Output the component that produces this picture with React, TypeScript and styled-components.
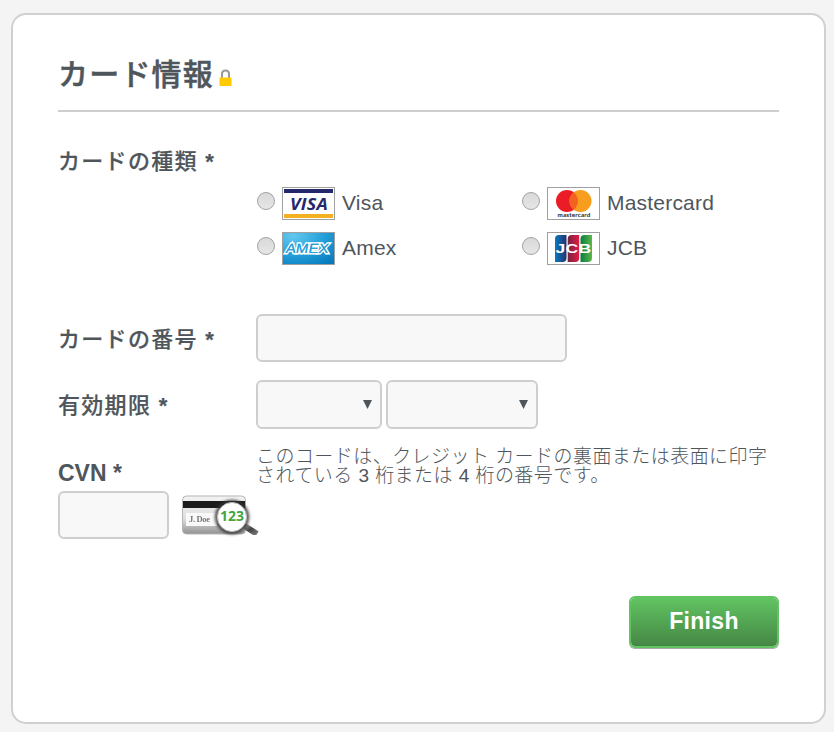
import React from "react";
import styled, { createGlobalStyle } from "styled-components";

const GlobalStyle = createGlobalStyle`
  * { box-sizing: border-box; }
  body {
    margin: 0;
    background: #f4f4f4;
    color: #4f565b;
    font-family: "Liberation Sans", "Noto Sans CJK JP", sans-serif;
  }
`;

const Page = styled.main`
  height: 732px;
  padding: 13px 8px 8px 11px;
  overflow: hidden;
`;

const Panel = styled.form`
  width: 815px;
  height: 711px;
  padding: 0 45px;
  border: 2px solid #d0d0d0;
  border-radius: 15px;
  background: #fff;
`;

const Header = styled.header`
  display: flex;
  height: 97px;
  padding-top: 39px;
  border-bottom: 2px solid #cecece;
`;

const Title = styled.h1`
  margin: 1px 0 0;
  font-size: 30px;
  line-height: 40px;
  letter-spacing: 1.2px;
  font-weight: 500;
  -webkit-text-stroke: 0.5px #4f565b;
`;

const Lock = styled.svg`
  margin: 15px 0 0 5px;
`;

const Label = styled.label<{ $latin?: boolean }>`
  display: block;
  width: 198px;
  flex: none;
  font-size: ${(p) => (p.$latin ? "23px" : "22px")};
  font-weight: ${(p) => (p.$latin ? 700 : 500)};
  line-height: 28px;
  letter-spacing: ${(p) => (p.$latin ? "0px" : "1.3px")};
  white-space: nowrap;
  -webkit-text-stroke: ${(p) => (p.$latin ? "0" : "0.2px #4f565b")};
`;

const Required = styled.span`
  font-weight: 700;
  letter-spacing: 0;
`;

const TypeSection = styled.section`
  height: 202px;
  padding-top: 36px;
`;

const TypeGrid = styled.div`
  display: grid;
  grid-template-columns: 265px 1fr;
  grid-auto-rows: 33px;
  row-gap: 12px;
  padding: 11px 0 0 199px;
`;

const TypeOption = styled.label`
  display: flex;
  align-items: flex-start;
  font-size: 21px;
  line-height: 31px;
  letter-spacing: 0.2px;
`;

const Radio = styled.input`
  appearance: none;
  width: 18px;
  height: 18px;
  margin: 5px 7px 0 0;
  border: 1px solid #a2a2a2;
  border-radius: 50%;
  background: linear-gradient(#d9d9d9, #e6e6e6);
`;

const CardArt = styled.svg`
  flex: none;
  margin-right: 7px;
`;

const FieldRow = styled.div`
  display: flex;
  align-items: center;
  height: 48px;
  margin-bottom: 18px;
`;

const FieldLabel = styled(Label)`
  padding-top: 4px;
`;

const TextField = styled.input<{ $width: number }>`
  width: ${(p) => p.$width}px;
  height: 48px;
  border: 2px solid #cecece;
  border-radius: 6px;
  background: #f8f8f8;
`;

const Dropdown = styled.button<{ $width: number }>`
  display: flex;
  align-items: center;
  justify-content: flex-end;
  width: ${(p) => p.$width}px;
  height: 49px;
  margin: 1px 4px 0 0;
  padding: 0 8px 1px 0;
  border: 2px solid #cecece;
  border-radius: 6px;
  background: #f8f8f8;
`;

const CvnRow = styled.div`
  display: flex;
  height: 45px;
`;

const CvnLabel = styled(Label)`
  padding-top: 13px;
`;

const Hint = styled.p`
  margin: 1px -8px 0 0;
  font-size: 19px;
  font-weight: 300;
  line-height: 19px;
  letter-spacing: 0.45px;
  white-space: nowrap;
`;

const CvnEntry = styled.div`
  display: flex;
  gap: 12px;
  height: 48px;
`;

const Actions = styled.footer`
  display: flex;
  justify-content: flex-end;
  margin-top: 57px;
`;

const Finish = styled.button`
  width: 150px;
  height: 52px;
  padding: 0 0 2px;
  border: 2px solid #61c361;
  border-radius: 6px;
  background: linear-gradient(#61c361, #458745) padding-box;
  box-shadow: 0 1px 0 #aaa;
  color: #fff;
  font: 700 23px "Liberation Sans", sans-serif;
  letter-spacing: 0.3px;
`;

const Arrow = () => (
  <svg width="9" height="9" viewBox="0 0 9 9">
    <path d="M0 0h9L4.5 9z" fill="#4f565b" />
  </svg>
);

const Frame = ({ fill = "#fff" }: { fill?: string }) => (
  <rect x=".5" y=".5" width="52" height="32" fill={fill} stroke="#a0a0a0" />
);

const Visa = () => (
  <CardArt width="53" height="33" viewBox="0 0 53 33">
    <Frame />
    <path d="M2 2h49v4H2z" fill="#26286c" />
    <path d="M2 27h49v4H2z" fill="#f3b122" />
    <text x="8" y="22.8" textLength="38" lengthAdjust="spacingAndGlyphs" fontFamily="Open Sans" fontSize="16.5" fontWeight="700" fontStyle="italic" fill="#26286c">VISA</text>
  </CardArt>
);

const Mastercard = () => (
  <CardArt width="53" height="33" viewBox="0 0 53 33">
    <Frame />
    <circle cx="20" cy="14" r="11" fill="#eb1c26" />
    <circle cx="33.5" cy="14" r="11" fill="#f79e1f" />
    <path d="M26.75 5.3a11 11 0 0 1 0 17.4 11 11 0 0 1 0-17.4z" fill="#f26322" />
    <text x="10.5" y="30" textLength="33" lengthAdjust="spacingAndGlyphs" fontFamily="Lato" fontSize="5.8" fontWeight="700" fill="#222">mastercard</text>
  </CardArt>
);

const Amex = () => (
  <CardArt width="53" height="33" viewBox="0 0 53 33">
    <defs>
      <radialGradient id="amexBlue" cx=".2" cy=".1" r="1.1">
        <stop offset="0" stopColor="#62c8ed" />
        <stop offset=".55" stopColor="#239fd8" />
        <stop offset="1" stopColor="#087abe" />
      </radialGradient>
    </defs>
    <Frame fill="url(#amexBlue)" />
    <g transform="translate(3.5 0) skewX(-10) translate(3.5 0)">
      <text x="0" y="21.5" textLength="43" lengthAdjust="spacingAndGlyphs" fontFamily="Liberation Sans" fontSize="13.5" fill="#2a9fd6" stroke="#fff" strokeWidth="2.8" paintOrder="stroke" strokeLinejoin="miter">AMEX</text>
      <text x="0" y="21.5" textLength="43" lengthAdjust="spacingAndGlyphs" fontFamily="Liberation Sans" fontSize="13.5" fill="#2a9fd6">AMEX</text>
    </g>
  </CardArt>
);

const Jcb = () => (
  <CardArt width="53" height="33" viewBox="0 0 53 33">
    <defs>
      <linearGradient id="jcbBlue"><stop stopColor="#087bc1" /><stop offset="1" stopColor="#25306e" /></linearGradient>
      <linearGradient id="jcbRed"><stop stopColor="#73243f" /><stop offset="1" stopColor="#e41c46" /></linearGradient>
      <linearGradient id="jcbGreen"><stop stopColor="#087e40" /><stop offset="1" stopColor="#60b64a" /></linearGradient>
    </defs>
    <Frame />
    <path d="M8 7q0-4 4-4h7.5v23q0 4-4 4H8z" fill="url(#jcbBlue)" />
    <path d="M20.7 7q0-4 4-4h7.5v23q0 4-4 4h-7.5z" fill="url(#jcbRed)" />
    <path d="M33.5 7q0-4 4-4H45v23q0 4-4 4h-7.5z" fill="url(#jcbGreen)" />
    <text x="8.5" y="21" textLength="36" lengthAdjust="spacingAndGlyphs" fontFamily="Liberation Sans" fontSize="12.5" fontWeight="700" fill="#fff">JCB</text>
  </CardArt>
);

const CvnArt = () => (
  <svg width="80" height="48" viewBox="0 0 80 48">
    <defs>
      <linearGradient id="cvnCard" x2="0" y2="1">
        <stop stopColor="#f3f3f3" /><stop offset=".6" stopColor="#dedede" /><stop offset="1" stopColor="#929292" />
      </linearGradient>
      <linearGradient id="handle" x2="1" y2="1"><stop stopColor="#aaa" /><stop offset=".5" stopColor="#444" /><stop offset="1" stopColor="#777" /></linearGradient>
      <filter id="soft" x="-20%" y="-20%" width="140%" height="140%"><feGaussianBlur stdDeviation="1.4" /></filter>
      <filter id="fine"><feGaussianBlur stdDeviation=".5" /></filter>
    </defs>
    <rect x="1.5" y="5" width="63" height="38" rx="4" fill="url(#cvnCard)" stroke="#b5b5b5" filter="url(#fine)" />
    <path d="M2 10h62v7H2z" fill="#1c1c1c" />
    <path d="M5 22h31v13H5z" fill="#f9f9f9" filter="url(#fine)" />
    <text x="8" y="31" textLength="21" fontFamily="Liberation Serif" fontSize="8.5" fontWeight="700" fill="#777" filter="url(#fine)">J. Doe</text>
    <path d="M62 34l14 9" stroke="url(#handle)" strokeWidth="6" filter="url(#fine)" />
    <circle cx="51" cy="26" r="15.5" fill="none" stroke="#333" strokeWidth="3" filter="url(#soft)" />
    <circle cx="51" cy="26" r="14.5" fill="#fff" stroke="#bbb" strokeWidth="1" />
    <text x="39" y="30.3" textLength="24" lengthAdjust="spacingAndGlyphs" fontFamily="Open Sans" fontSize="13.5" fontWeight="700" fill="#41a640">123</text>
  </svg>
);

const cards = [
  { name: "Visa", Art: Visa },
  { name: "Mastercard", Art: Mastercard },
  { name: "Amex", Art: Amex },
  { name: "JCB", Art: Jcb },
];

export default function App() {
  return (
    <Page>
      <GlobalStyle />
      <Panel onSubmit={(e) => e.preventDefault()}>
        <Header>
          <Title>カード情報</Title>
          <Lock width="13" height="18" viewBox="0 0 13 18">
            <path d="M3 9V5q0-3.5 3.5-3.5T10 5v4" fill="none" stroke="#999" strokeWidth="2" />
            <path d="M.5 8.5h12V17H.5z" fill="#ffca00" />
          </Lock>
        </Header>
        <TypeSection>
          <Label as="div">カードの種類 <Required>*</Required></Label>
          <TypeGrid>
            {cards.map(({ name, Art }) => (
              <TypeOption key={name}>
                <Radio type="radio" name="cardType" value={name} />
                <Art />
                {name}
              </TypeOption>
            ))}
          </TypeGrid>
        </TypeSection>
        <FieldRow>
          <FieldLabel htmlFor="number">カードの番号 <Required>*</Required></FieldLabel>
          <TextField id="number" $width={311} />
        </FieldRow>
        <FieldRow>
          <FieldLabel as="div">有効期限 <Required>*</Required></FieldLabel>
          <Dropdown type="button" $width={126} aria-haspopup="listbox"><Arrow /></Dropdown>
          <Dropdown type="button" $width={152} aria-haspopup="listbox"><Arrow /></Dropdown>
        </FieldRow>
        <CvnRow>
          <CvnLabel $latin htmlFor="cvn">CVN *</CvnLabel>
          <Hint>
            このコードは、クレジット カードの裏面または表面に印字<br />
            されている 3 桁または 4 桁の番号です。
          </Hint>
        </CvnRow>
        <CvnEntry>
          <TextField id="cvn" $width={111} />
          <CvnArt />
        </CvnEntry>
        <Actions>
          <Finish type="submit">Finish</Finish>
        </Actions>
      </Panel>
    </Page>
  );
}
